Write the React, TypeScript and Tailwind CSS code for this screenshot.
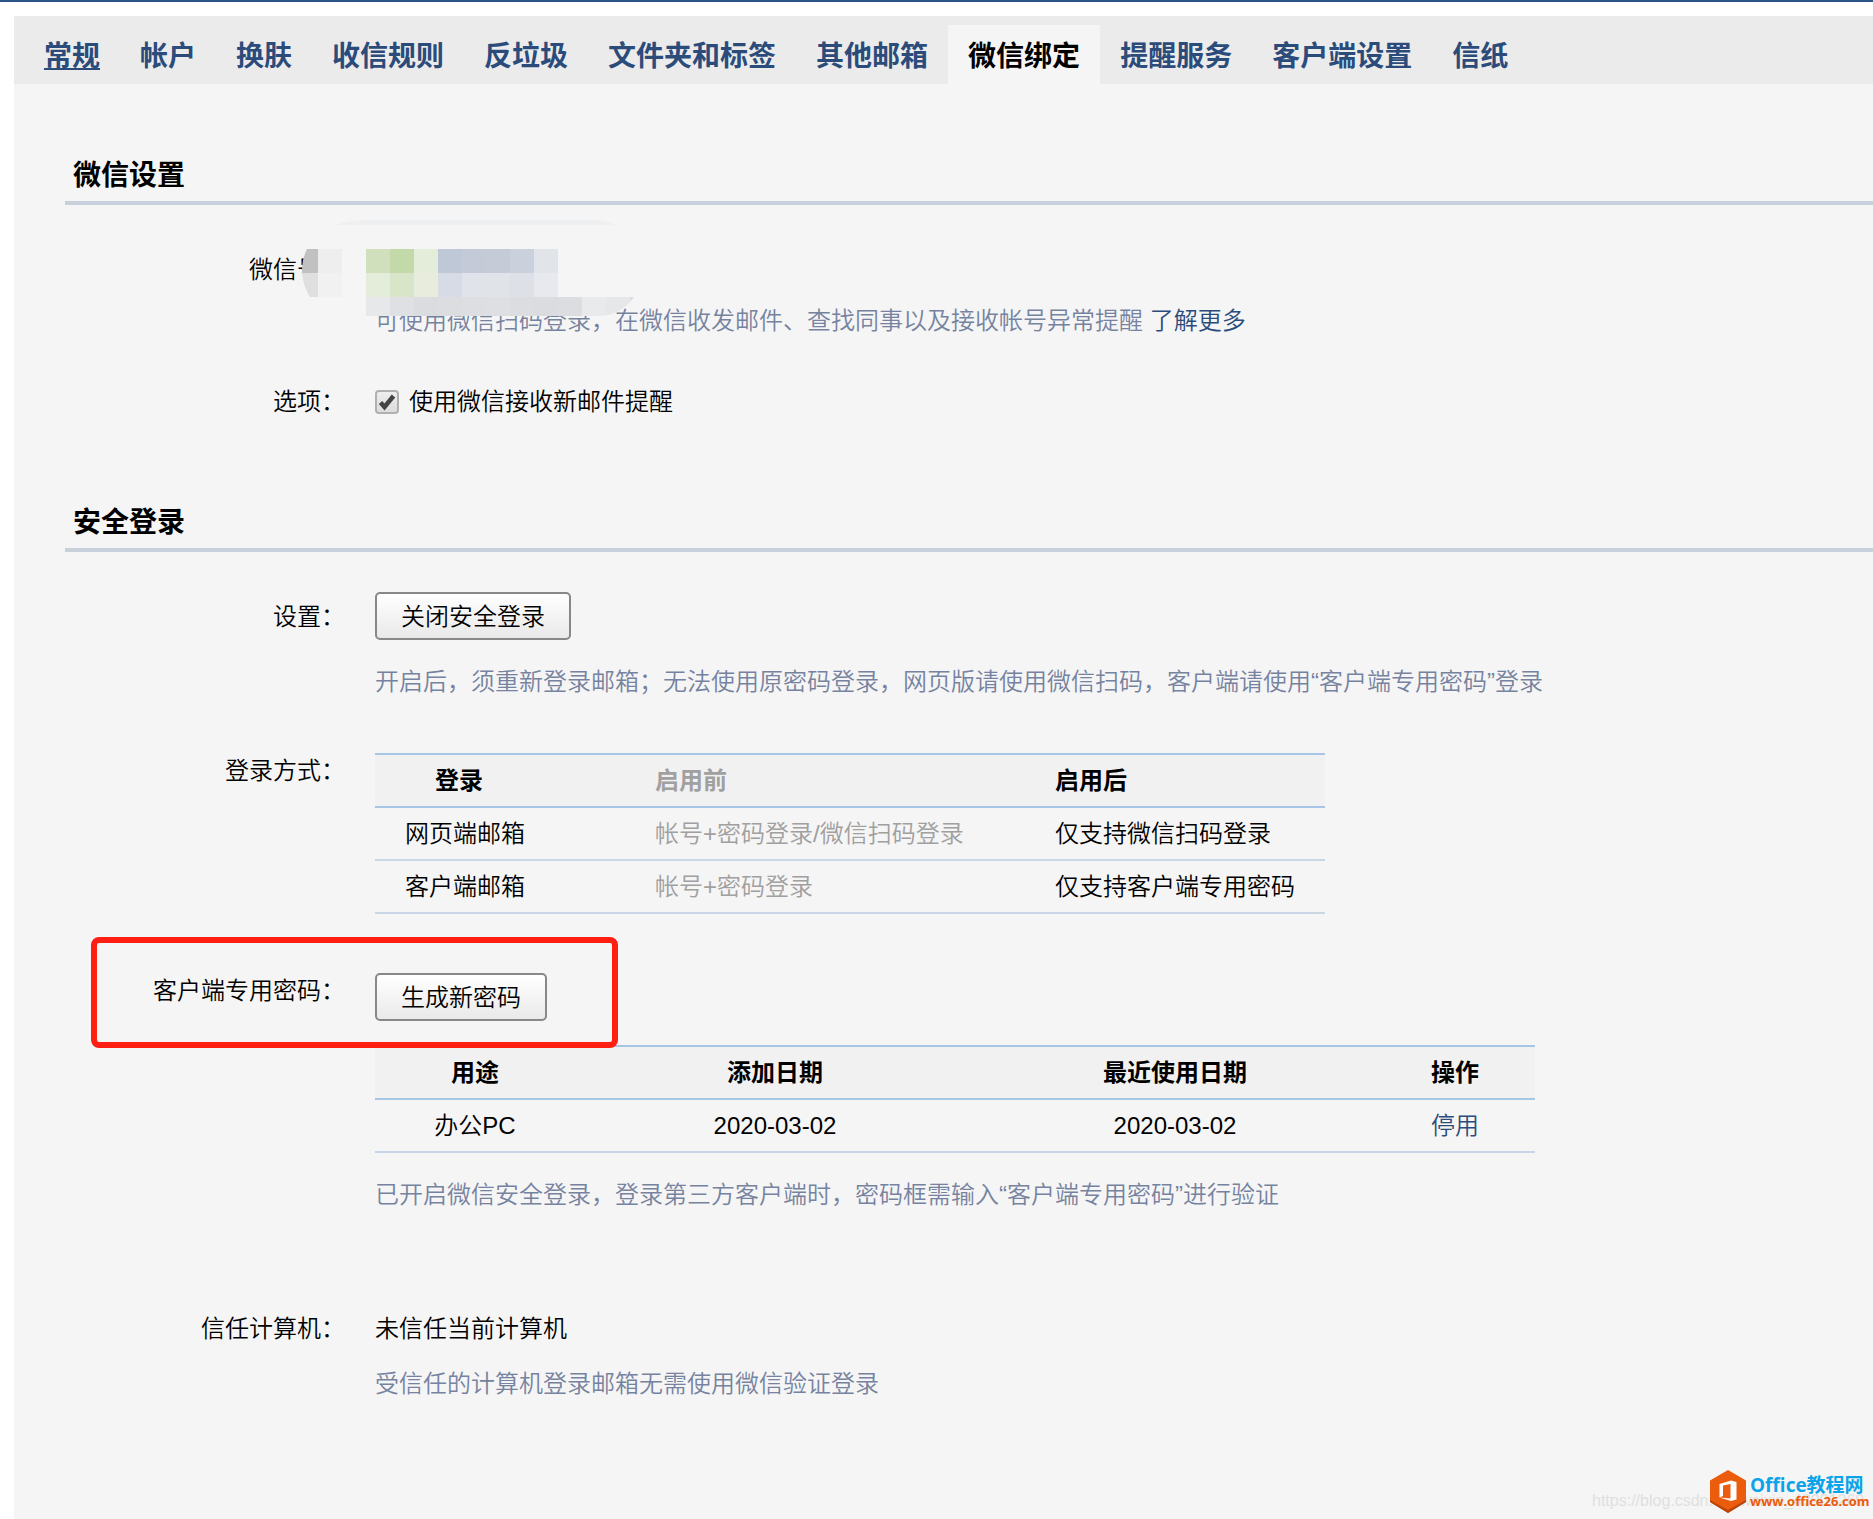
import React from 'react'

/* ============================================================
   Mail settings page: WeChat binding tab
   ============================================================ */

const TABS = [
  '常规',
  '帐户',
  '换肤',
  '收信规则',
  '反垃圾',
  '文件夹和标签',
  '其他邮箱',
  '微信绑定',
  '提醒服务',
  '客户端设置',
  '信纸',
]
const ACTIVE_TAB = '微信绑定'

/* ── Tab bar ── */
function TabBar() {
  return (
    <nav className="flex h-[68px] items-end bg-[#ebebeb] pl-[10px] text-[28px] font-bold leading-[64px]">
      {TABS.map(tab => (
        <a
          key={tab}
          href="#"
          className={
            tab === ACTIVE_TAB
              ? 'block h-[59px] whitespace-nowrap bg-[#f5f5f5] px-5 text-black'
              : `block h-[59px] whitespace-nowrap px-5 text-[#2b4c7b] ${tab === '常规' ? 'underline' : ''}`
          }
        >
          {tab}
        </a>
      ))}
    </nav>
  )
}

/* ── Section title with rule ── */
function SectionTitle({ children }: { children: React.ReactNode }) {
  return (
    <h2 className="ml-[51px] border-b-4 border-[#c8d0dc] pb-[5px] pl-2 text-[28px] font-bold leading-10">
      {children}
    </h2>
  )
}

/* ── Label column + content column ── */
interface RowProps {
  label: React.ReactNode
  children: React.ReactNode
  className?: string
}

function Row({ label, children, className = '' }: RowProps) {
  return (
    <div className={`flex gap-[30px] ${className}`}>
      <div className="w-[331px] shrink-0 text-right">{label}</div>
      <div className="min-w-0 grow">{children}</div>
    </div>
  )
}

function Hint({ children, className = '' }: { children: React.ReactNode; className?: string }) {
  return <p className={`text-[#7683a0] ${className}`}>{children}</p>
}

function PushButton({ children }: { children: React.ReactNode }) {
  return (
    <button
      type="button"
      className="block h-12 rounded-[5px] border-2 border-[#888888] bg-gradient-to-b from-white to-[#e9e9e9] px-6 leading-[46px]"
    >
      {children}
    </button>
  )
}

/* ── Pixelated patch over the account name ── */
const MOSAIC = [
  ['#d0dfbc', '#c4d9a9', '#e4ecda', '#bfc8d6', '#c4cad7', '#c5cbd7', '#cbd1dc', '#e1e5e9'],
  ['#e4ecda', '#d8e5c8', '#e7ecdd', '#d6dbe5', '#e0e3e9', '#e0e3e8', '#dde0e6', '#e7e9ee'],
]
const MOSAIC_FOOT = [
  '#e7e8ea', '#dfe0e4', '#dbdce0', '#dcdde1', '#dddee2', '#dedfe3',
  '#dcdde1', '#dbdce0', '#dcdde1', '#e9eaec', '#e5e7e9', '#dcdde1',
]

function AccountMosaic() {
  return (
    <svg
      className="absolute left-[288px] top-[-32px]"
      width="340"
      height="100"
      viewBox="0 0 340 100"
      aria-hidden="true"
    >
      <path d="M33 5 Q48 0 70 0 H290 Q303 0 313 5 Z" fill="#eeeff1" />
      <path d="M5 29 H60 V77 H9 Q-5 52 5 29 Z" fill="#f5f5f5" />
      <path d="M5 29 H16 V53 H0 Q0 38 5 29 Z" fill="#c1c1c1" />
      <path d="M0 53 H16 V77 H8 Q1 66 0 53 Z" fill="#dfdfdf" />
      <rect x="16" y="29" width="24" height="24" fill="#eeeeee" />
      <rect x="16" y="53" width="24" height="24" fill="#f1f1f1" />
      {MOSAIC.map((row, r) =>
        row.map((c, i) => (
          <rect key={`${r}-${i}`} x={64 + i * 24} y={29 + r * 24} width="24" height="24" fill={c} />
        )),
      )}
      <clipPath id="foot">
        <path d="M64 77 H332 Q320 94 300 96 H64 Z" />
      </clipPath>
      <g clipPath="url(#foot)">
        {MOSAIC_FOOT.map((c, i) => (
          <rect key={i} x={64 + i * 24} y="77" width="24" height="20" fill={c} />
        ))}
      </g>
    </svg>
  )
}

/* ── Tables ── */
const LOGIN_ROWS = [
  ['网页端邮箱', '帐号+密码登录/微信扫码登录', '仅支持微信扫码登录'],
  ['客户端邮箱', '帐号+密码登录', '仅支持客户端专用密码'],
]

function LoginTable() {
  return (
    <table className="w-[950px] table-fixed border-collapse text-left leading-[51px]">
      <thead>
        <tr className="border-y-2 border-[#a7c6e6] bg-[#f1f1f1]">
          <th className="w-[280px] pl-[60px]">登录</th>
          <th className="w-[400px] text-[#a0a0a0]">启用前</th>
          <th>启用后</th>
        </tr>
      </thead>
      <tbody>
        {LOGIN_ROWS.map(([name, before, after]) => (
          <tr key={name} className="border-b-2 border-[#c8d6e5]">
            <td className="pl-[30px]">{name}</td>
            <td className="text-[#a0a0a0]">{before}</td>
            <td>{after}</td>
          </tr>
        ))}
      </tbody>
    </table>
  )
}

function PasswordTable() {
  return (
    <table className="w-[1160px] table-fixed border-collapse text-center leading-[51px]">
      <thead>
        <tr className="border-y-2 border-[#a7c6e6] bg-[#f1f1f1]">
          <th className="w-[200px]">用途</th>
          <th className="w-[400px]">添加日期</th>
          <th className="w-[400px]">最近使用日期</th>
          <th>操作</th>
        </tr>
      </thead>
      <tbody>
        <tr className="border-b-2 border-[#c8d6e5]">
          <td>办公PC</td>
          <td>2020-03-02</td>
          <td>2020-03-02</td>
          <td>
            <a href="#" className="text-[#2b4c7b]">停用</a>
          </td>
        </tr>
      </tbody>
    </table>
  )
}

/* ── Site mark, bottom right ── */
function SiteMark() {
  return (
    <div className="absolute bottom-0 right-0 h-[60px] w-[290px]">
      <span className="absolute left-[9px] top-[30px] whitespace-nowrap text-base leading-6 text-[#e0e0e0]">
        https://blog.csdn.net/weixin_43901269
      </span>
      <svg className="absolute left-[127px] top-[11px]" width="36" height="43" viewBox="0 0 36 43" aria-hidden="true">
        <path d="M18 0 L36 10.5 V32 L18 43 L0 32 V10.5 Z" fill="#eb5c0c" />
        <path d="M0 30 L18 40 L36 30 V32 L18 43 L0 32 Z" fill="#b9440a" />
        <path d="M9.5 14 L21 10.5 L26.5 12 V29.5 L21 31 L9.5 27.5 L20.5 28.5 V14 L13 15.5 V26 L9.5 27.5 Z" fill="#ffffff" />
      </svg>
      <div className="absolute left-[167px] top-4 whitespace-nowrap font-['Open_Sans','Noto_Sans_CJK_SC',sans-serif] font-bold">
        <div className="text-[19px] leading-5 text-[#0ba3ea]">Office教程网</div>
        <div className="text-[13px] leading-3 text-[#eb5c0c]">www.office26.com</div>
      </div>
    </div>
  )
}

export default function App() {
  return (
    <div className="relative min-h-screen border-t-2 border-[#2b5587] bg-white pl-[14px] pt-[14px] font-['Liberation_Sans','Noto_Sans_CJK_SC',sans-serif] text-2xl font-[350] leading-9 text-black">
      <div className="min-h-[calc(100vh-16px)] bg-[#f5f5f5]">
        <TabBar />

        <section className="pt-[72px]">
          <SectionTitle>微信设置</SectionTitle>
          <Row label="微信号：" className="relative mt-[47px]">
            <Hint className="pt-[51px]">
              可使用微信扫码登录，在微信收发邮件、查找同事以及接收帐号异常提醒{' '}
              <a href="#" className="text-[#2b4c7b]">了解更多</a>
            </Hint>
            <AccountMosaic />
          </Row>
          <Row label="选项：" className="mt-[45px]">
            <label className="flex items-center gap-[10px]">
              <span className="relative block size-6">
                <input
                  type="checkbox"
                  defaultChecked
                  className="block size-6 appearance-none rounded-[4px] border-2 border-[#b0b0b0] bg-gradient-to-b from-[#eeeeee] to-[#dcdcdc]"
                />
                <svg className="pointer-events-none absolute inset-0" viewBox="0 0 24 24" aria-hidden="true">
                  <path d="M5.5 12.5 L9.5 17 L18.5 6" fill="none" stroke="#444444" strokeWidth="4.5" />
                </svg>
              </span>
              使用微信接收新邮件提醒
            </label>
          </Row>
        </section>

        <section className="pt-[83px]">
          <SectionTitle>安全登录</SectionTitle>
          <Row label={<div className="pt-[7px]">设置：</div>} className="mt-10">
            <PushButton>关闭安全登录</PushButton>
            <Hint className="mt-6">
              开启后，须重新登录邮箱；无法使用原密码登录，网页版请使用微信扫码，客户端请使用“客户端专用密码”登录
            </Hint>
          </Row>
          <Row label="登录方式：" className="mt-[53px]">
            <LoginTable />
          </Row>
          <div className="relative mt-[59px]">
            <Row label="客户端专用密码：">
              <PushButton>生成新密码</PushButton>
            </Row>
            <div className="pointer-events-none absolute left-[77px] top-[-36px] h-[111px] w-[527px] rounded-lg border-[6px] border-[#ff1f12]" />
          </div>
          <Row label="" className="mt-6">
            <PasswordTable />
            <Hint className="mt-6">
              已开启微信安全登录，登录第三方客户端时，密码框需输入“客户端专用密码”进行验证
            </Hint>
          </Row>
          <Row label="信任计算机：" className="mt-[98px] pb-[100px]">
            <p>未信任当前计算机</p>
            <Hint className="mt-[19px]">受信任的计算机登录邮箱无需使用微信验证登录</Hint>
          </Row>
        </section>
      </div>
      <SiteMark />
    </div>
  )
}
